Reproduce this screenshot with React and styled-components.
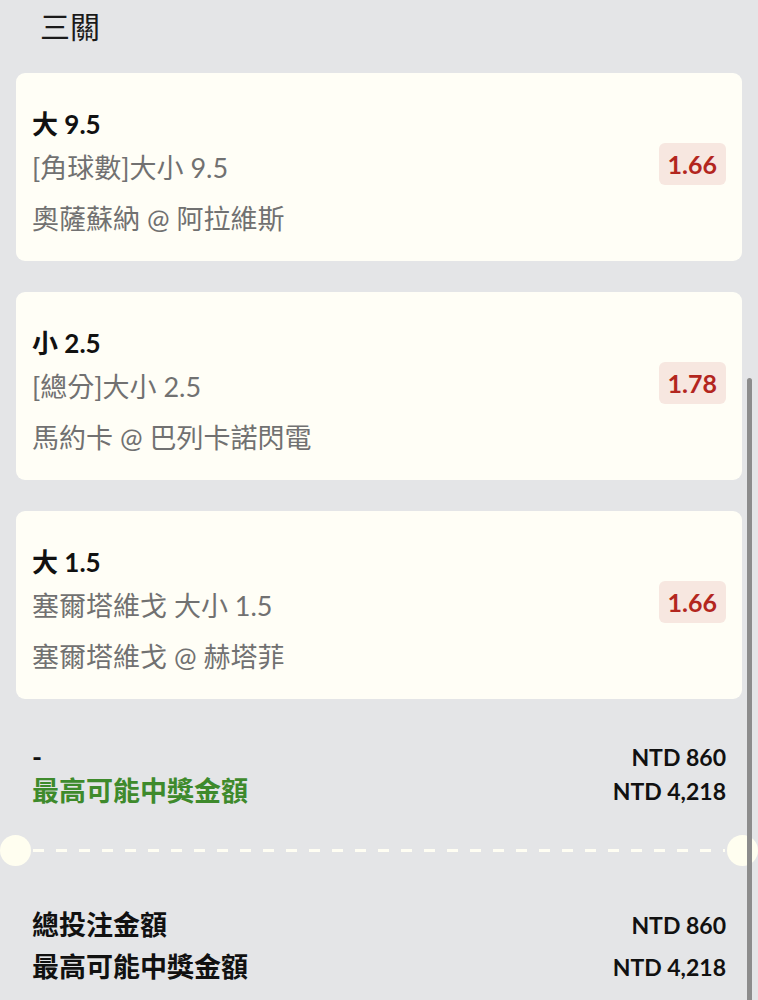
import React from "react";
import styled, { createGlobalStyle } from "styled-components";

const Global = createGlobalStyle`
  html, body { margin: 0; padding: 0; background: #e4e5e7; }
  body { overflow: hidden; font-family: "Lato", "Noto Sans CJK TC", sans-serif; color: #111; }
  * { box-sizing: border-box; }
`;

const Page = styled.div`
  width: 758px;
  height: 1000px;
  background: #e4e5e7;
  overflow: hidden;
  position: relative;
`;

const Title = styled.h1`
  margin: 0 0 21px;
  padding-left: 40px;
  height: 52px;
  line-height: 52px;
  font-size: 30px;
  font-weight: 400;
  color: #1a1a1a;
`;

const CardList = styled.div`
  display: flex;
  flex-direction: column;
  gap: 31px;
  padding: 0 16px;
`;

const Card = styled.div`
  background: #fffef6;
  border-radius: 9px;
  padding: 31px 16px 15px;
  display: flex;
  align-items: center;
  justify-content: space-between;
`;

const Info = styled.div`
  display: flex;
  flex-direction: column;
`;

const Pick = styled.div`
  font-size: 26px;
  font-weight: 700;
  line-height: 40px;
  color: #111;
`;

const Sub = styled.div`
  font-size: 27px;
  font-weight: 400;
  line-height: ${(p) => p.$lh}px;
  color: #717171;
`;

const Odds = styled.div`
  background: #f7e7e0;
  color: #b3261e;
  border-radius: 6px;
  font-size: 25px;
  font-weight: 700;
  line-height: 42px;
  padding: 0 9px;
  margin-bottom: 22px;
`;

const Summary = styled.div`
  display: flex;
  flex-direction: column;
  padding: 0 32px;
  margin-top: ${(p) => p.$top}px;
  gap: ${(p) => p.$gap}px;
`;

const Row = styled.div`
  display: flex;
  justify-content: space-between;
  align-items: center;
  line-height: 34px;
`;

const Label = styled.div`
  font-size: 27px;
  font-weight: 700;
  color: ${(p) => (p.$green ? "#3e8a2c" : "#111")};
`;

const Amount = styled.div`
  font-size: 23px;
  font-weight: 700;
  color: #111;
`;

const Divider = styled.div`
  display: flex;
  align-items: center;
  margin-top: ${(p) => p.$top}px;
  height: 32px;
`;

const Notch = styled.div`
  width: 31px;
  height: 31px;
  border-radius: 50%;
  background: #fffef0;
  flex: none;
`;

const Dashes = styled.div`
  flex: 1;
  height: 3px;
  margin: 0 2px;
  background: repeating-linear-gradient(
    to right,
    #fffef3 0 11px,
    transparent 11px 23px
  );
`;

const ScrollThumb = styled.div`
  position: absolute;
  left: 747px;
  top: 378px;
  width: 5px;
  bottom: 0;
  border-radius: 3px 3px 0 0;
  background: #8c8c8c;
`;

const bets = [
  { pick: "大 9.5", market: "[角球數]大小 9.5", match: "奧薩蘇納 @ 阿拉維斯", odds: "1.66" },
  { pick: "小 2.5", market: "[總分]大小 2.5", match: "馬約卡 @ 巴列卡諾閃電", odds: "1.78" },
  { pick: "大 1.5", market: "塞爾塔維戈 大小 1.5", match: "塞爾塔維戈 @ 赫塔菲", odds: "1.66" },
];

export default function App() {
  return (
    <Page>
      <Global />
      <Title>三關</Title>
      <CardList>
        {bets.map((b, i) => (
          <Card key={i}>
            <Info>
              <Pick>{b.pick}</Pick>
              <Sub $lh={48}>{b.market}</Sub>
              <Sub $lh={54}>{b.match}</Sub>
            </Info>
            <Odds>{b.odds}</Odds>
          </Card>
        ))}
      </CardList>
      <Summary $top={41} $gap={0}>
        <Row>
          <Label>-</Label>
          <Amount>NTD 860</Amount>
        </Row>
        <Row>
          <Label $green>最高可能中獎金額</Label>
          <Amount>NTD 4,218</Amount>
        </Row>
      </Summary>
      <Divider $top={26}>
        <Notch />
        <Dashes />
        <Notch />
      </Divider>
      <Summary $top={42} $gap={8}>
        <Row>
          <Label>總投注金額</Label>
          <Amount>NTD 860</Amount>
        </Row>
        <Row>
          <Label>最高可能中獎金額</Label>
          <Amount>NTD 4,218</Amount>
        </Row>
      </Summary>
      <ScrollThumb />
    </Page>
  );
}
